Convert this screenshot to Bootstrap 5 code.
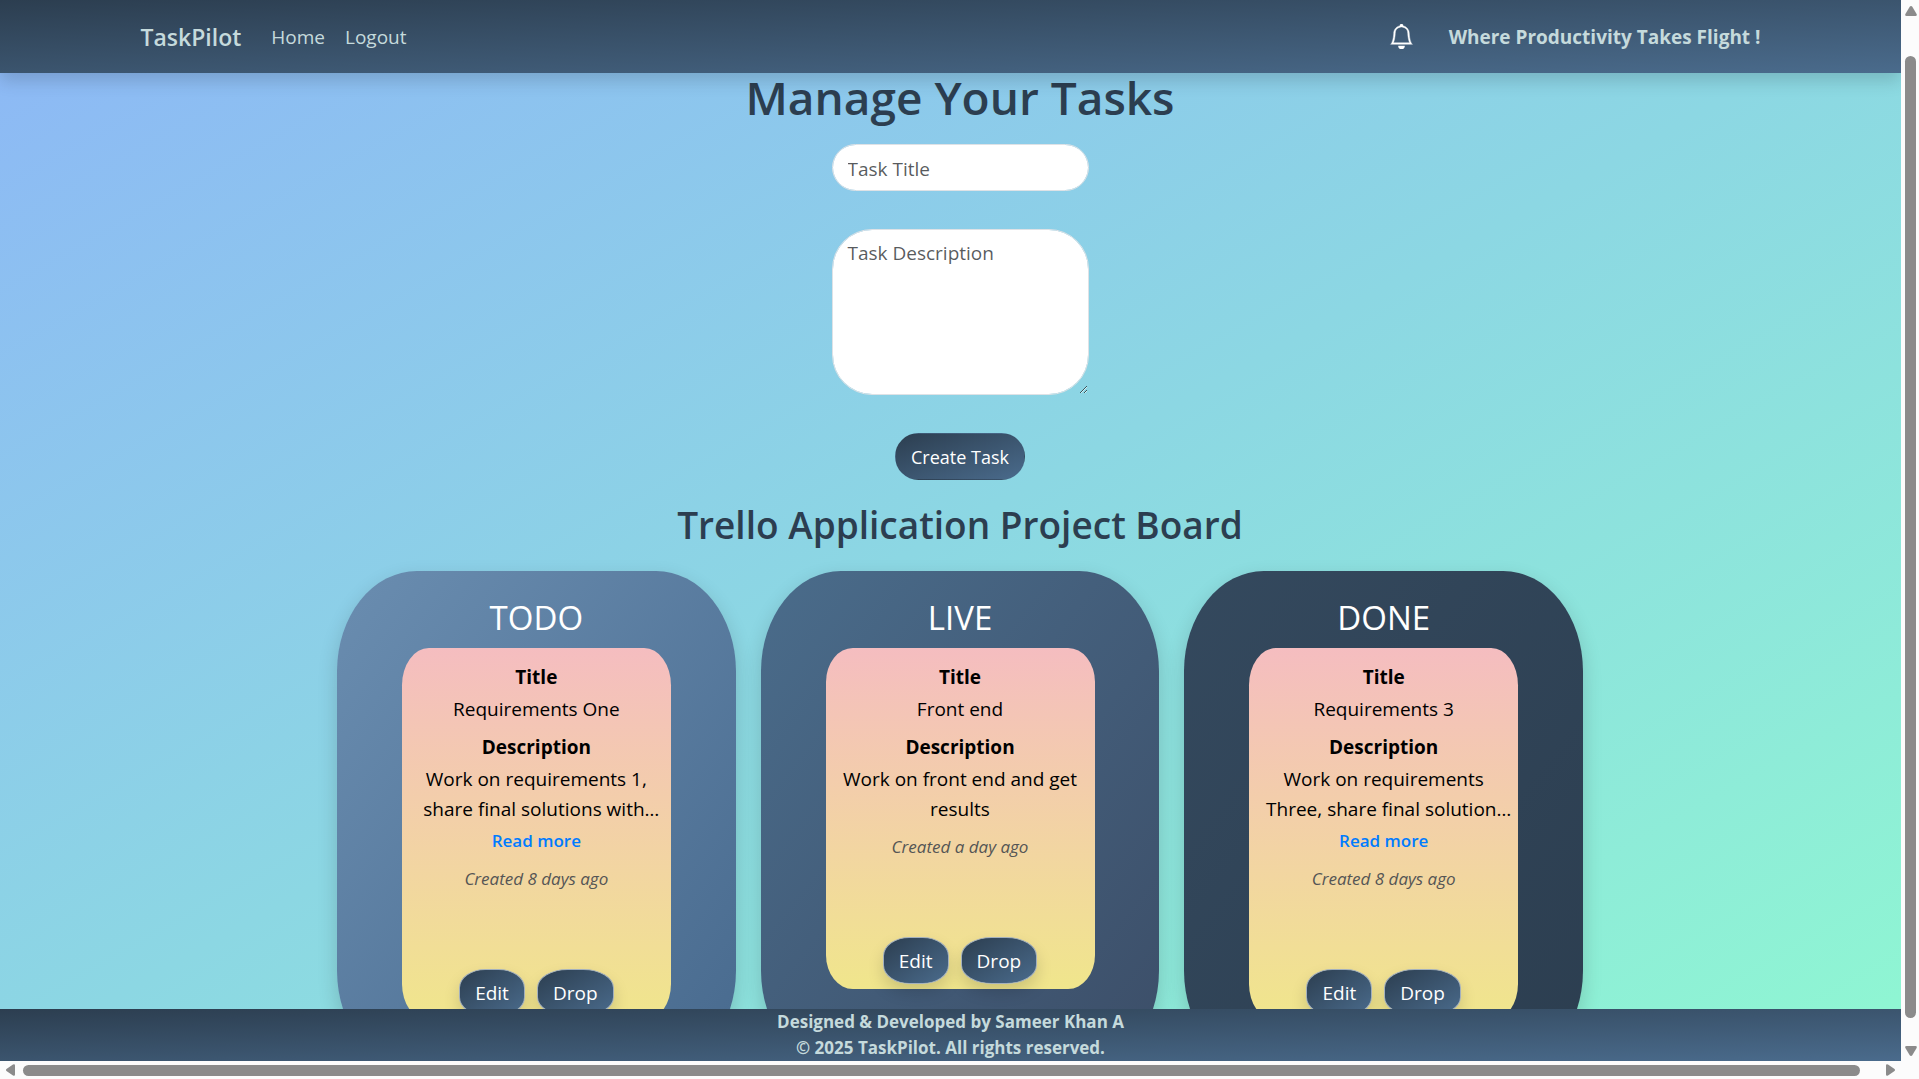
<!DOCTYPE html>
<html lang="en">
<head>
<meta charset="utf-8">
<meta name="viewport" content="width=device-width, initial-scale=1">
<title>TaskPilot</title>
<link rel="stylesheet" href="https://cdn.jsdelivr.net/npm/bootstrap@5.3.0/dist/css/bootstrap.min.css">
<style>
  body { font-family: "Open Sans", "Noto Sans", sans-serif; font-size: 19px; line-height: 30px; color: #000; overflow: hidden; }
  .shell { display: grid; grid-template: minmax(0, 1fr) 18px / minmax(0, 1fr) 18px; height: 100vh; background: #fcfcfc; }
  .page { background: linear-gradient(to bottom right, #8db7f6, #8cd7e3 50%, #8ff7d2); overflow: hidden; }
  .steel { background: linear-gradient(to bottom right, #2c3e50, #4a6b8c); }

  .topbar { height: 73px; box-shadow: 0 8px 16px rgba(0, 0, 0, .15); z-index: 2; --bs-navbar-padding-y: 0; }
  .topbar .container { max-width: 1650px; padding: 0 15px; }
  .topbar a, .motto, .credits { color: #c5dadc; }
  .topbar .navbar-brand { font-size: 23px; font-weight: 600; margin-right: 30px; }
  .topbar .navbar-nav { gap: 20px; }
  .topbar .navbar-nav .nav-link { padding: 0; }
  .motto, .credits { font-weight: 700; }
  .motto { margin-left: 35px; }
  .bell { color: #fff; border: 0; background: none; padding: 0; line-height: 1; }

  .work { padding: 2px 0 0 19px; min-height: 0; z-index: 1; }
  .work h1 { font-size: 46px; line-height: 44px; font-weight: 600; color: #2c3e50; margin-bottom: 25px; }
  .work h2 { font-size: 37px; line-height: 48px; font-weight: 600; color: #2c3e50; margin: 21px 0 22px; }
  .task-form { width: 257px; gap: 38px; }
  .task-form .form-control { font-size: 19px; line-height: 30px; padding: 8px 15px; border-radius: 40px; }
  .task-form input.form-control { height: 47px; padding: 9px 15px 6px; }
  .task-form textarea.form-control { height: 166px; resize: vertical; display: block; }
  .pill { color: #fff; font-size: 19px; line-height: 31px; padding: 8px 15px 6px; border: 1px solid transparent; border-radius: 25px; }
  .pill:hover { color: #fff; }
  .task-form .pill { font-size: 18px; }

  .board { width: 67%; max-width: 1246px; gap: 25px; }
  .lane { flex: 1 1 0; min-width: 0; height: 500px; border-radius: 20%; padding-top: 26px; box-shadow: 0 8px 20px rgba(0, 0, 0, .16); }
  .lane h3 { font-size: 33px; line-height: 42px; font-weight: 400; color: #fff; margin-bottom: 9px; }
  .lane-todo { background: linear-gradient(to bottom right, #6a8db0, #486a8e); }
  .lane-live { background: linear-gradient(to bottom right, #4a6c8b, #3c4e68); }
  .lane-done { background: linear-gradient(to bottom right, #34495e, #2c3e50); }
  .task { width: 269px; border-radius: 10%; padding: 14px 12px 5px; background: linear-gradient(#f5bdc0, #f0e68c); text-align: center; }
  .task dl { margin: 0; }
  .task dt { font-weight: 700; margin-bottom: 2px; }
  .task dd { margin-bottom: 8px; }
  .task .shortened { white-space: nowrap; margin-bottom: 2px; }
  /* The ellipsis hangs past the centred line */
  .hang { margin-right: -10px; }
  .more { display: block; color: #007bff; font-size: 17px; font-weight: 600; text-decoration: none; margin-bottom: 8px; }
  .stamp { color: #555; font-size: 17px; font-style: italic; margin-bottom: 75px; }
  .task-actions { gap: 12px; }
  .task .pill { border: 1px solid #a3b0bd; border-radius: 40%; box-shadow: 0 8px 16px rgba(0, 0, 0, .15); }

  .credits { font-size: 17px; line-height: 26px; z-index: 3; }

  .vbar { padding: 6px 2px 5px 4px; }
  .hbar { padding: 0 6px; }
  .thumb { background: #8b8b8b; border-radius: 6px; flex: 1 1 auto; }
  .vbar .thumb { width: 11px; margin: 40px 0 28px; }
  .hbar .thumb { height: 11px; margin: 0 26px 0 8px; }
  .scroll-arrow { fill: #8b8b8b; display: block; flex: none; }
</style>
</head>
<body>
<div class="shell">
  <div class="page d-flex flex-column">
    <nav class="topbar steel navbar navbar-expand position-relative flex-shrink-0">
      <div class="container">
        <a class="navbar-brand py-0" href="#">TaskPilot</a>
        <ul class="navbar-nav me-auto">
          <li class="nav-item"><a class="nav-link" href="#">Home</a></li>
          <li class="nav-item"><a class="nav-link" href="#">Logout</a></li>
        </ul>
        <button class="bell" type="button" aria-label="Notifications">
          <svg width="25" height="25" viewBox="0 0 16 16" fill="currentColor" stroke="currentColor" stroke-width=".25"><path d="M8 16a2 2 0 0 0 2-2H6a2 2 0 0 0 2 2zM8 1.918l-.797.161A4.002 4.002 0 0 0 4 6c0 .628-.134 2.197-.459 3.742-.16.767-.376 1.566-.663 2.258h10.244c-.287-.692-.502-1.49-.663-2.258C12.134 8.197 12 6.628 12 6a4.002 4.002 0 0 0-3.203-3.92L8 1.917zM14.22 12c.223.447.481.801.78 1H1c.299-.199.557-.553.78-1C2.68 10.2 3 6.88 3 6c0-2.42 1.72-4.44 4.005-4.901a1 1 0 1 1 1.99 0A5.002 5.002 0 0 1 13 6c0 .88.32 4.2 1.22 6z"/></svg>
        </button>
        <span class="motto">Where Productivity Takes Flight !</span>
      </div>
    </nav>

    <main class="work flex-grow-1 d-flex flex-column align-items-center text-center">
      <h1>Manage Your Tasks</h1>
      <form class="task-form d-flex flex-column align-items-center flex-shrink-0">
        <input class="form-control" type="text" placeholder="Task Title" aria-label="Task Title">
        <textarea class="form-control" placeholder="Task Description" aria-label="Task Description"></textarea>
        <button class="btn pill steel" type="button">Create Task</button>
      </form>
      <h2>Trello Application Project Board</h2>
      <div class="board d-flex flex-shrink-0">
        <section class="lane lane-todo d-flex flex-column align-items-center">
          <h3>TODO</h3>
          <article class="task">
            <dl>
              <dt>Title</dt><dd>Requirements One</dd>
              <dt>Description</dt><dd class="shortened">Work on requirements 1,<br>share final solutions with<span class="hang">…</span></dd>
            </dl>
            <a class="more" href="#">Read more</a>
            <p class="stamp">Created 8 days ago</p>
            <div class="task-actions d-flex justify-content-center">
              <button class="btn pill steel" type="button">Edit</button>
              <button class="btn pill steel" type="button">Drop</button>
            </div>
          </article>
        </section>
        <section class="lane lane-live d-flex flex-column align-items-center">
          <h3>LIVE</h3>
          <article class="task">
            <dl>
              <dt>Title</dt><dd>Front end</dd>
              <dt>Description</dt><dd>Work on front end and get results</dd>
            </dl>
            <p class="stamp">Created a day ago</p>
            <div class="task-actions d-flex justify-content-center">
              <button class="btn pill steel" type="button">Edit</button>
              <button class="btn pill steel" type="button">Drop</button>
            </div>
          </article>
        </section>
        <section class="lane lane-done d-flex flex-column align-items-center">
          <h3>DONE</h3>
          <article class="task">
            <dl>
              <dt>Title</dt><dd>Requirements 3</dd>
              <dt>Description</dt><dd class="shortened">Work on requirements<br>Three, share final solution<span class="hang">…</span></dd>
            </dl>
            <a class="more" href="#">Read more</a>
            <p class="stamp">Created 8 days ago</p>
            <div class="task-actions d-flex justify-content-center">
              <button class="btn pill steel" type="button">Edit</button>
              <button class="btn pill steel" type="button">Drop</button>
            </div>
          </article>
        </section>
      </div>
    </main>

    <footer class="credits steel text-center position-relative flex-shrink-0">
      <div>Designed &amp; Developed by Sameer Khan A</div>
      <div>© 2025 TaskPilot. All rights reserved.</div>
    </footer>
  </div>

  <div class="vbar d-flex flex-column">
    <svg class="scroll-arrow" width="12" height="10" viewBox="0 0 12 10"><path d="M6 0q.8 0 1.300.8L11.600 8Q12.400 10 10.500 10H1.500Q-.4 10 .4 8L4.700.8Q5.200 0 6 0z"/></svg>
    <div class="thumb"></div>
    <svg class="scroll-arrow" width="12" height="10" viewBox="0 0 12 10"><path d="M6 10q.8 0 1.300-.8L11.600 2Q12.400 0 10.500 0H1.500Q-.4 0 .4 2L4.700 9.200Q5.200 10 6 10z"/></svg>
  </div>
  <div class="hbar d-flex align-items-center">
    <svg class="scroll-arrow" width="9" height="12" viewBox="0 0 9 12"><path d="M0 6q0-.8.8-1.300L7 .4Q9-.4 9 1.500v9Q9 12.400 7 11.600L.8 7.300Q0 6.800 0 6z"/></svg>
    <div class="thumb"></div>
    <svg class="scroll-arrow" width="9" height="12" viewBox="0 0 9 12"><path d="M9 6q0-.8-.8-1.300L2 .4Q0-.4 0 1.500v9Q0 12.400 2 11.600L8.200 7.300Q9 6.800 9 6z"/></svg>
  </div>
</div>
<script src="https://cdn.jsdelivr.net/npm/bootstrap@5.3.0/dist/js/bootstrap.bundle.min.js"></script>
</body>
</html>
